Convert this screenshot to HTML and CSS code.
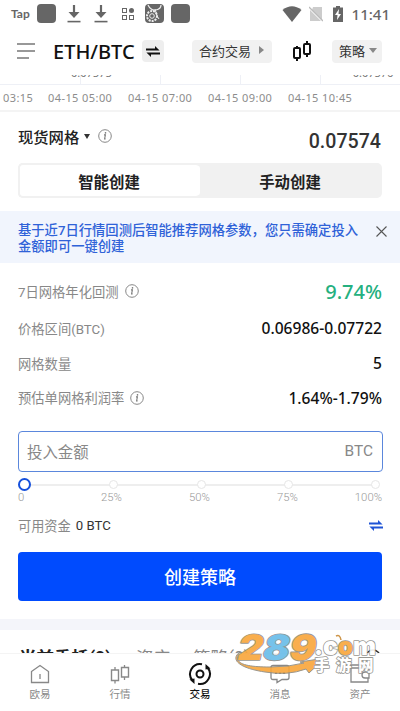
FILE: index.html
```html
<!DOCTYPE html>
<html lang="zh-CN">
<head>
<meta charset="utf-8">
<title>ETH/BTC</title>
<link rel="stylesheet" href="styles.css">
</head>
<body>
<svg class="defs" width="0" height="0">
  <symbol id="info" viewBox="0 0 14 14"><circle cx="7" cy="7" r="6.3" fill="none" stroke="#888" stroke-width="1"/><path d="M6 5.9h1.4L6.6 9.9h1" fill="none" stroke="#777" stroke-width="1.1"/><circle cx="7.5" cy="3.9" r=".8" fill="#777"/></symbol>
  <symbol id="download" viewBox="0 0 14 18"><path d="M7 0v9" stroke="#666" stroke-width="2.2"/><path d="M1.5 7h11L7 13z" fill="#666"/><path d="M.5 16.6h13" stroke="#666" stroke-width="1.6"/></symbol>
  <symbol id="candles" viewBox="0 0 20 20"><path d="M5 5v2.5M5 17v3M15 0v3M15 13v3" stroke="currentColor" stroke-width="2"/><rect x="2" y="7" width="6" height="10" rx="1" fill="none" stroke="currentColor" stroke-width="2"/><rect x="12" y="3" width="6" height="10" rx="1" fill="none" stroke="currentColor" stroke-width="2"/></symbol>
  <symbol id="candles-thin" viewBox="0 0 20 20"><path d="M5 3v3M5 16.500v3M14.500 1v2.500M14.500 13v3" stroke="currentColor" stroke-width="1.300"/><path d="M1.500 6h7v10.500h-7zM11.500 3.500h7V13h-7z" fill="none" stroke="currentColor" stroke-width="1.400"/></symbol>
  <symbol id="swap" viewBox="0 0 14 11"><path d="M0 4.500h13.600L9 0v2.600H0zM14 6.500H.4L5 11V8.400h9z" fill="currentColor"/></symbol>
</svg>
<div class="screen">
  <header class="status">
    <span class="tap">Tap</span>
    <span class="app"></span>
    <svg class="dl" width="14" height="18"><use href="#download"/></svg>
    <svg class="dl" width="14" height="18"><use href="#download"/></svg>
    <svg class="grid-ic" width="12" height="12" viewBox="0 0 12 12"><g fill="none" stroke="#666" stroke-width="1"><rect x=".5" y=".5" width="4" height="4"/><rect x=".5" y="7.5" width="4" height="4"/><rect x="7.5" y="7.5" width="4" height="4"/></g><circle cx="9.5" cy="2.5" r="2.5" fill="#666"/></svg>
    <svg class="pic" width="19" height="19" viewBox="0 0 19 19"><rect width="19" height="19" rx="4" fill="#666"/><path d="M3 1q3 6 8 5t5-5" fill="none" stroke="#eee" stroke-width="1.2"/><circle cx="7" cy="12" r="5" fill="none" stroke="#eee" stroke-width="2" stroke-dasharray="2 1"/><circle cx="7" cy="12" r="2.3" fill="none" stroke="#eee"/><path d="M10 5l2 7 2 3" stroke="#eee" fill="none"/></svg>
    <span class="app last"></span>
    <svg class="wifi" width="20" height="16" viewBox="0 0 20 16"><path d="M.5 4Q10-3.5 19.5 4L10 16z" fill="#666"/></svg>
    <svg class="sim" width="14" height="16" viewBox="0 0 14 16"><path d="M4 1h9v13L3 4zM1 4l11 11H1z" fill="#ccc"/><path d="M0 1l14 14" stroke="#bbb" stroke-width="1.3"/></svg>
    <svg class="bat" width="10" height="16" viewBox="0 0 10 16"><path d="M3 0h4v1.5h3V16H0V1.5h3z" fill="#666"/><path d="M6 3L2 9h2.5L4 14l4-6H5.5z" fill="#fff"/></svg>
    <span class="clock">11:41</span>
  </header>
  <nav class="top">
    <svg class="menu" width="18" height="16" viewBox="0 0 18 16"><path d="M0 1h18M0 8h18M0 15h12" stroke="#777" stroke-width="1.5"/></svg>
    <h1>ETH/BTC</h1>
    <span class="swapbox"><svg width="14" height="11"><use href="#swap"/></svg></span>
    <span class="chip contract">合约交易<i class="right"></i></span>
    <svg class="candle" width="20" height="20"><use href="#candles"/></svg>
    <span class="chip strategy">策略<i class="down"></i></span>
  </nav>
  <div class="chart">
    <div class="plot"><span class="tick one">0.07575</span><span class="tick two">0.07576</span></div>
    <div class="times"><span>03:15</span><span>04-15 05:00</span><span>04-15 07:00</span><span>04-15 09:00</span><span>04-15 10:45</span></div>
  </div>
  <section class="title"><strong>现货网格</strong><i class="down"></i><svg width="14" height="14"><use href="#info"/></svg><b>0.07574</b></section>
  <div class="tabs"><span class="on">智能创建</span><span>手动创建</span></div>
  <div class="notice"><p>基于近7日行情回测后智能推荐网格参数，您只需确定投入<br>金额即可一键创建</p><svg width="11" height="11" viewBox="0 0 11 11"><path d="M.5.5l10 10M10.5.5l-10 10" stroke="#555" stroke-width="1.1"/></svg></div>
  <dl class="stats">
    <div class="first"><dt>7日网格年化回测<svg width="14" height="14"><use href="#info"/></svg></dt><dd class="green">9.74%</dd></div>
    <div><dt>价格区间(BTC)</dt><dd>0.06986-0.07722</dd></div>
    <div><dt>网格数量</dt><dd>5</dd></div>
    <div><dt>预估单网格利润率<svg width="14" height="14"><use href="#info"/></svg></dt><dd>1.64%-1.79%</dd></div>
  </dl>
  <div class="amount"><span>投入金额</span><span class="unit">BTC</span></div>
  <div class="slider"><i class="knob"></i><i></i><i></i><i></i><i></i></div>
  <div class="marks"><span>0</span><span>25%</span><span>50%</span><span>75%</span><span>100%</span></div>
  <div class="funds"><span>可用资金</span><b>0 BTC</b><svg width="14" height="11"><use href="#swap"/></svg></div>
  <button class="create">创建策略</button>
  <div class="divider"></div>
  <div class="orders"><strong>当前委托(0)</strong><span>资产</span><span class="third">策略(0)</span><svg width="16" height="16" viewBox="0 0 16 16"><circle cx="8" cy="8" r="7" fill="none" stroke="#333" stroke-width="1.5"/></svg></div>
  <footer class="bottom">
    <a><svg width="20" height="20" viewBox="0 0 20 20"><path d="M1.5 7.5L10 1.500l8.500 6V18.500H1.500zM10 10v5" fill="none" stroke="currentColor" stroke-width="1.3"/></svg>欧易</a>
    <a><svg width="20" height="20"><use href="#candles-thin"/></svg>行情</a>
    <a class="active"><svg width="24" height="24" viewBox="0 0 24 24"><g fill="none" stroke="currentColor" stroke-width="2"><path d="M4.500 18.500A10 10 0 0 1 14 2.200M19.500 5.500A10 10 0 0 1 10 21.800"/><circle cx="12" cy="12" r="3.500"/></g><path d="M1.500 17.500l5-1v5.500zM22.500 6.500l-5 1V2z" fill="currentColor"/></svg>交易</a>
    <a><svg width="20" height="20" viewBox="0 0 20 20"><path d="M3 1.500h14q2 0 2 2v10q0 2-2 2h-5L7 18.500v-3H3q-2 0-2-2v-10q0-2 2-2z" fill="none" stroke="currentColor" stroke-width="1.300"/><path d="M5 9h2m2 0h2m2 0h2" stroke="currentColor" stroke-width="2"/></svg>消息</a>
    <a><svg width="20" height="20" viewBox="0 0 20 20"><path d="M18 8V4H1v14h17v-4M1 4V1h13v3M19 8h-4a3 3 0 0 0 0 6h4z" fill="none" stroke="currentColor" stroke-width="1.300"/></svg>资产</a>
  </footer>
  <svg class="brand" width="150" height="56" viewBox="0 0 150 56">
    <path d="M8 22C-1 34 15 37 38 37Q57 37 72 33L68 32 93 28 77 43 74 39Q55 46 33 42C6 38-2 29 8 22z" fill="#f9a63a" stroke="#8f8b80"/>
    <g font-weight="900" stroke-linejoin="round" paint-order="stroke" stroke="#8d8d88" stroke-width="1.600">
      <text transform="translate(4 30) skewX(-12)" font-family="Inter" font-size="35" textLength="78" lengthAdjust="spacingAndGlyphs" fill="#f9a63a">2<tspan fill="#68bce8">8</tspan>9</text>
      <text x="82" y="25" font-family="Inter" font-size="25" textLength="62" lengthAdjust="spacingAndGlyphs" fill="#fff">.c<tspan fill="#f9a63a">o</tspan>m</text>
      <text x="82" y="40.500" font-family="Noto Sans CJK SC" font-size="15.500" letter-spacing="6.500" fill="#fff">手游网</text>
    </g>
    <path d="M104 6q4-2 5 4" fill="none" stroke="#c98a35" stroke-width="1.500"/>
  </svg>
</div>
</body>
</html>
```
FILE: styles.css
```css
* { box-sizing: border-box; }
body { margin: 0; background: #fff; font-family: Roboto, "Noto Sans CJK SC", sans-serif; color: #222; }
.defs { position: absolute; }
.screen { position: relative; width: 400px; height: 711px; overflow: hidden; display: flex; flex-direction: column; }
.screen > * { flex-shrink: 0; }
svg { display: block; flex: none; }
.status { height: 27px; display: flex; align-items: center; padding: 0 10px 0 11px; color: #666; }
.tap { font: 700 12px Lato; width: 26px; }
.app { width: 19px; height: 19px; border-radius: 4px; background: #666; }
.dl { margin-left: 11px; }
.dl + .dl { margin-left: 13px; }
.grid-ic { margin-left: 14px; }
.pic { margin-left: 11px; }
.last { margin-left: 7px; }
.wifi { margin-left: 92px; }
.sim { margin-left: 7px; }
.bat { margin-left: 10px; }
.clock { margin-left: auto; font: 500 15px "Noto Sans"; }
.top { height: 48px; display: flex; align-items: center; padding: 0 17px; }
h1 { margin: 0 0 0 18px; width: 89px; font: 500 20px "Noto Sans"; color: #111; }
.swapbox { width: 22px; height: 22px; border-radius: 4px; background: #eee; display: grid; place-items: center; color: #111; }
.chip { height: 23px; border-radius: 4px; background: #f1f1f1; display: flex; align-items: center; font-size: 13px; color: #333; padding: 0 0 2px 7px; white-space: nowrap; }
.contract { width: 80px; margin-left: 28px; }
.strategy { width: 50px; margin-left: 20px; }
.candle { margin-left: 20px; color: #111; }
.right { margin-left: 8px; border-left: 5px solid #888; border-top: 4px solid transparent; border-bottom: 4px solid transparent; }
.down { margin-left: 4px; border-top: 5px solid #888; border-left: 4px solid transparent; border-right: 4px solid transparent; }
.chart { height: 37px; border-bottom: 2px solid #f4f4f4; }
.plot { height: 10px; border-bottom: 1px solid #eef0f6; background: linear-gradient(#eef0f6, #eef0f6) 80px 0 / 1px 10px no-repeat, linear-gradient(#eef0f6, #eef0f6) 160px 0 / 1px 10px no-repeat, linear-gradient(#eef0f6, #eef0f6) 240px 0 / 1px 10px no-repeat, linear-gradient(#eef0f6, #eef0f6) 320px 0 / 1px 10px no-repeat; display: flex; overflow: hidden; font: 11px/11px "Noto Sans"; color: #777; }
.tick { margin-top: -8px; }
.one { margin-left: 71px; }
.two { margin-left: 241px; }
.times { display: grid; grid-template-columns: 45px repeat(4, 80px); padding: 5px 0 0 3px; font: 11px/15px "Noto Sans"; letter-spacing: .42px; color: #8c8c8c; white-space: nowrap; }
.title { height: 51px; padding: 0 18px 3px; display: flex; align-items: center; }
.title strong { font-size: 15.3px; font-weight: 500; }
.title .down { border-top-color: #333; border-left-width: 3px; border-right-width: 3px; margin: 0 8px 0 5px; }
.title b { font: 500 19.6px "Roboto"; margin: 10px 1px 0 auto; color: #333; }
.tabs { height: 35px; margin: 0 18px; background: #f1f1f1; border-radius: 5px; display: grid; grid-template-columns: 182px 1fr; }
.tabs span { display: grid; place-items: center; font-size: 15.4px; font-weight: 700; padding-right: 2px; }
.tabs .on { background: #fff; border: 2px solid #f1f1f1; border-right: 0; border-radius: 5px; }
.notice { height: 52px; margin-top: 13px; padding: 12px 13px 0 18px; background: #f1f5fd; display: flex; justify-content: space-between; }
.notice p { margin: 0; font-size: 13.3px; line-height: 15.5px; color: #2f62d8; white-space: nowrap; font-weight: 500; }
.notice svg { margin-top: 3px; }
.stats { margin: 8px 18px 0; }
.stats div { height: 34.7px; display: flex; align-items: center; justify-content: space-between; }
.stats .first { height: 40px; }
dt { display: flex; align-items: center; gap: 6px; font-size: 13.3px; color: #888; }
dd { margin: 0; font: 500 15.6px "Noto Sans"; color: #111; }
dd.green { font-size: 20px; color: #25b080; }
.amount { height: 41px; margin: 15.6px 17px 0 18px; border: 1px solid #5b87dc; border-radius: 4px; display: flex; align-items: center; justify-content: space-between; padding: 0 9px 0 8px; font-size: 15.4px; color: #888; }
.slider { height: 13px; margin: 6px 18px 0; display: flex; align-items: center; justify-content: space-between; background: linear-gradient(#eee, #eee) 0 6px / 360px 2px no-repeat; padding-right: 2px; }
.slider i { width: 9px; height: 9px; border: 1.5px solid #e6e6e6; border-radius: 50%; background: #fff; }
.slider .knob { width: 13px; height: 13px; border: 2px solid #1550dc; }
.marks { height: 13px; margin: 0 18px; display: grid; grid-template-columns: 83px 88px 88px 1fr auto; font: 300 11.3px/13px Roboto; color: #999; }
.funds { height: 20px; margin: 12px 17px 0 18px; display: flex; align-items: center; font-size: 13.2px; color: #888; }
.funds b { margin-left: 5px; font-weight: 400; color: #333; }
.funds svg { margin-left: auto; color: #1f54d6; }
.create { height: 49px; margin: 16px 18px 0; border: 0; border-radius: 4px; background: #004bfe; color: #fff; font: 500 18px "Noto Sans CJK SC"; }
.divider { height: 11px; margin-top: 18px; background: #f4f5fa; }
.orders { height: 23px; padding: 17px 19px 0 19px; display: flex; align-items: flex-start; overflow: hidden; font-size: 17.5px; line-height: 22px; color: #888; }
.orders strong { width: 117px; color: #222; }
.third { margin-left: 22px; }
.orders svg { margin-left: auto; margin-top: 2px; }
.bottom { height: 58px; border-top: 1px solid #f4f4f4; background: #fff; display: grid; grid-template-columns: repeat(5, 1fr); }
.bottom a { display: flex; flex-direction: column; align-items: center; justify-content: space-between; padding: 10px 0 10px; height: 58px; font-size: 10.5px; line-height: 14px; color: #888; }
.bottom .active { color: #111; padding-top: 8px; font-weight: 500; }
.brand { position: absolute; left: 232px; top: 630px; opacity: .9; }
```
